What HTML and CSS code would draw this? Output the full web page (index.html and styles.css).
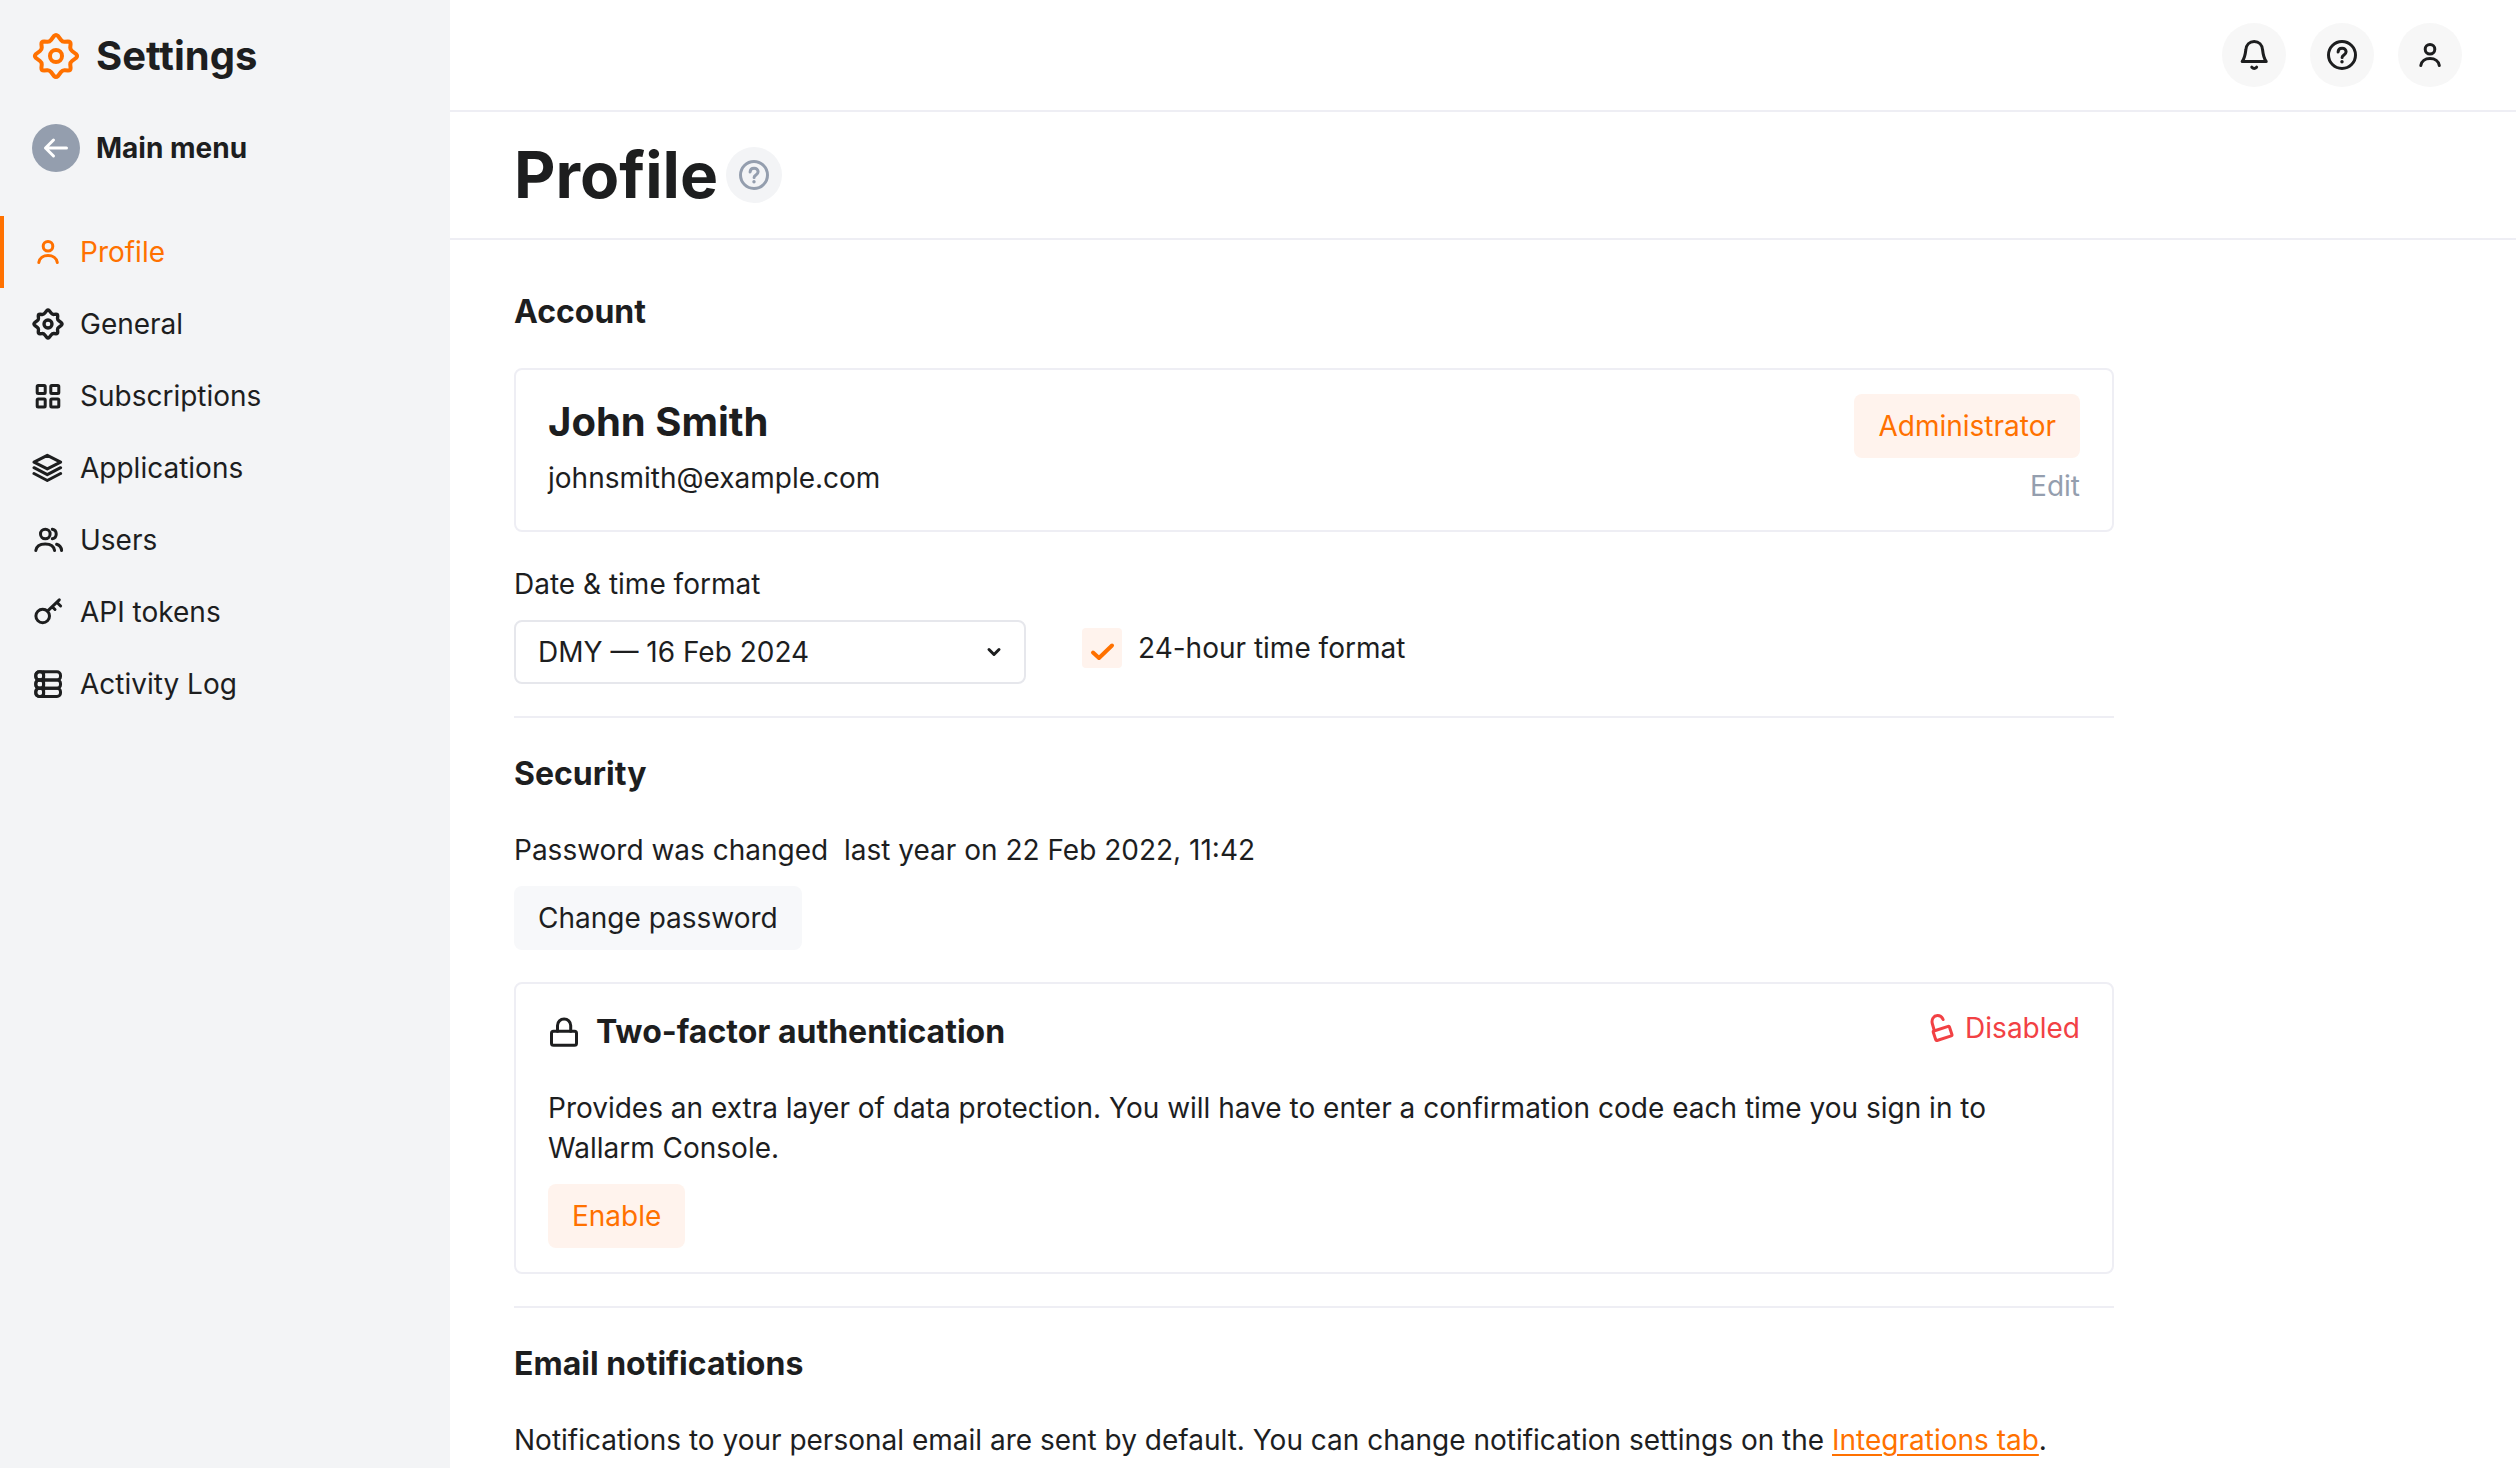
FILE: index.html
```html
<!DOCTYPE html>
<html lang="en">
<head>
<meta charset="utf-8">
<meta name="viewport" content="width=device-width, initial-scale=1">
<title>Profile</title>
<link rel="stylesheet" href="styles.css">
</head>
<body>
<svg class="sprite" aria-hidden="true">
  <symbol id="gear" viewBox="-24 -24 48 48">
    <path d="M-2 -20Q0 -22 2 -20L5 -16Q6.500 -14 9 -14.300L12 -14.600Q14.600 -14.600 14.600 -12L14.300 -9Q14 -6.500 16 -5L20 -2Q22 0 20 2L16 5Q14 6.500 14.300 9L14.600 12Q14.600 14.600 12 14.600L9 14.300Q6.500 14 5 16L2 20Q0 22 -2 20L-5 16Q-6.500 14 -9 14.300L-12 14.600Q-14.600 14.600 -14.600 12L-14.300 9Q-14 6.500 -16 5L-20 2Q-22 0 -20 -2L-16 -5Q-14 -6.500 -14.300 -9L-14.600 -12Q-14.600 -14.600 -12 -14.600L-9 -14.300Q-6.500 -14 -5 -16Z"/>
    <circle r="6"/>
  </symbol>
  <symbol id="person" viewBox="0 0 32 32">
    <circle cx="16" cy="10.200" r="4.800"/>
    <path d="M6.800 26.500C7.400 22.200 11 19.600 16 19.600S24.700 22.200 25.300 26.500"/>
  </symbol>
  <symbol id="question" viewBox="0 0 32 32">
    <circle cx="16" cy="16" r="13.500"/>
    <path d="M12.100 13c.1-2.400 1.800-3.800 4-3.800s4 1.400 4 3.500c0 3.200-4 3.200-4 5.800"/>
    <circle class="dot" cx="16" cy="22.800" r="1.700"/>
  </symbol>
</svg>

<div class="app">
  <aside class="sidebar">
    <div class="brand">
      <svg class="icon icon-brand"><use href="#gear"/></svg>
      <span>Settings</span>
    </div>
    <a class="back" href="#">
      <span class="back-badge">
        <svg class="icon" viewBox="8 8 32 32"><path d="M13.500 24H34.500M21.500 16L13.500 24l8 8"/></svg>
      </span>
      Main menu
    </a>
    <nav class="menu">
      <a class="menu-item active" href="#"><svg class="icon"><use href="#person"/></svg>Profile</a>
      <a class="menu-item" href="#"><svg class="icon icon-gear"><use href="#gear"/></svg>General</a>
      <a class="menu-item" href="#">
        <svg class="icon" viewBox="0 0 32 32"><rect x="5.200" y="5.400" width="8" height="8" rx="1"/><rect x="18.800" y="5.400" width="8" height="8" rx="1"/><rect x="5.200" y="19" width="8" height="8" rx="1"/><rect x="18.800" y="19" width="8" height="8" rx="1"/></svg>Subscriptions</a>
      <a class="menu-item" href="#">
        <svg class="icon" viewBox="0 0 32 32"><path d="M15.300 3.300L28.600 10.100 15.300 16.900 2 10.100zM2 15.700l13.300 7 13.300-7M2 21.500l13.300 7 13.300-7"/></svg>Applications</a>
      <a class="menu-item" href="#">
        <svg class="icon" viewBox="0 0 32 32"><circle cx="13.300" cy="10" r="4.800"/><path d="M20.300 5.200a4.900 4.900 0 0 1 0 9.600M3.800 26.500C4.400 22.400 8 19.900 13.200 19.900S22 22.400 22.600 26.500M24.600 20.300c2.800.8 4.700 3.100 5 6.200"/></svg>Users</a>
      <a class="menu-item" href="#">
        <svg class="icon" viewBox="0 0 32 32"><circle cx="10.700" cy="20" r="6.800"/><path d="M15.500 15.200L27.300 3.800M24.800 6.200l3.800 3.800M20.200 10.700l2.800 2.800"/></svg>API tokens</a>
      <a class="menu-item" href="#">
        <svg class="icon" viewBox="0 0 32 32"><rect x="3.800" y="3.800" width="24.700" height="8.200" rx="3.500"/><rect x="3.800" y="12" width="24.700" height="8.200" rx="3.500"/><rect x="3.800" y="20.200" width="24.700" height="8.200" rx="3.500"/><rect x="3.800" y="3.800" width="7.800" height="8.200" rx="3.500"/><rect x="3.800" y="12" width="7.800" height="8.200" rx="3.500"/><rect x="3.800" y="20.200" width="7.800" height="8.200" rx="3.500"/><path d="M11.600 4V28"/></svg>Activity Log</a>
    </nav>
  </aside>

  <div class="page">
    <header class="topbar">
      <button class="round" type="button" aria-label="Notifications">
        <svg class="icon" viewBox="0 0 32 32"><path d="M4.200 22.500h24c-2.600-3.500-3-6-3.600-11.500-.4-5-3.700-8.400-8.400-8.400s-8 3.400-8.400 8.400c-.6 5.500-1 8-3.600 11.500zM13.800 28.200q2.400 2.600 4.800 0"/></svg>
      </button>
      <button class="round" type="button" aria-label="Help"><svg class="icon"><use href="#question"/></svg></button>
      <button class="round" type="button" aria-label="User"><svg class="icon"><use href="#person"/></svg></button>
    </header>

    <div class="titlebar">
      <h1>Profile</h1>
      <button class="round round-small" type="button" aria-label="About this page"><svg class="icon"><use href="#question"/></svg></button>
    </div>

    <main class="content">
      <section class="section">
        <h2>Account</h2>
        <div class="card account">
          <div class="identity">
            <p class="name">John Smith</p>
            <p>johnsmith@example.com</p>
          </div>
          <div class="role">
            <span class="chip accent">Administrator</span>
            <a class="edit" href="#">Edit</a>
          </div>
        </div>
        <div class="format">
          <label for="date-format">Date &amp; time format</label>
          <div class="format-row">
            <div class="select">
              <select id="date-format"><option>DMY — 16 Feb 2024</option></select>
              <svg class="chevron" viewBox="0 0 16 16"><path d="M3 5.500l5 5 5-5"/></svg>
            </div>
            <label class="check">
              <span class="check-box">
                <input type="checkbox" checked>
                <svg viewBox="0 0 40 40"><path d="M11 24.500l6 5.500L30 17.500"/></svg>
              </span>
              24-hour time format
            </label>
          </div>
        </div>
      </section>

      <section class="section">
        <h2>Security</h2>
        <div class="stack">
          <p class="spaced">Password was changed  last year on 22 Feb 2022, 11:42</p>
          <button class="chip neutral" type="button">Change password</button>
        </div>
        <div class="card">
          <div class="card-head">
            <h2 class="with-icon">
              <svg class="icon" viewBox="0 0 32 32"><rect x="3.500" y="15.300" width="25" height="14" rx="2"/><path d="M9.500 15.300V9.500a6.600 6.600 0 0 1 13.200 0v5.800"/></svg>
              Two-factor authentication
            </h2>
            <span class="status">
              <svg class="icon" viewBox="0 0 32 32"><rect x="9.100" y="16.400" width="17" height="10" rx="1" transform="rotate(-18 17.600 21.400)"/><path d="M9 17.500L7.400 12C6 7 8.800 3.800 12.500 3.600c2.700-.1 4.500 1.300 5.600 3.900"/></svg>
              Disabled
            </span>
          </div>
          <div class="stack">
            <p>Provides an extra layer of data protection. You will have to enter a confirmation code each time you sign in to Wallarm Console.</p>
            <button class="chip accent" type="button">Enable</button>
          </div>
        </div>
      </section>

      <section class="section">
        <h2>Email notifications</h2>
        <p>Notifications to your personal email are sent by default. You can change notification settings on the <a class="link" href="#">Integrations tab</a>.</p>
      </section>
    </main>
  </div>
</div>
</body>
</html>
```
FILE: styles.css
```css
:root {
  --text: #1d1e1f;
  --muted: #949eae;
  --orange: #ff7100;
  --orange-soft: #fff3ed;
  --line: #eeeef4;
  --red: #f24144;
}

* {
  box-sizing: border-box;
}

html,
body {
  height: 100%;
}

body {
  margin: 0;
  overflow: hidden;
  background: #fff;
  color: var(--text);
  font: 400 28px/40px Inter, "Liberation Sans", sans-serif;
}

h1,
h2,
p {
  margin: 0;
}

h1 {
  font-size: 64px;
  line-height: 80px;
}

h2 {
  font-size: 32px;
  line-height: 48px;
}

a {
  color: inherit;
  text-decoration: none;
}

button,
select {
  font: inherit;
  color: inherit;
}

.sprite {
  display: none;
}

.icon {
  flex: none;
  width: 32px;
  height: 32px;
  fill: none;
  stroke: currentColor;
  stroke-width: 3;
  stroke-linecap: round;
  stroke-linejoin: round;
}

.dot {
  fill: currentColor;
  stroke: none;
}

.app {
  display: flex;
  min-height: 100%;
}

/* Sidebar */

.sidebar {
  flex: none;
  width: 450px;
  background: #f3f4f6;
}

.brand,
.back {
  display: flex;
  align-items: center;
  gap: 16px;
  padding: 0 32px;
  font-weight: 700;
}

.brand {
  height: 112px;
  font-size: 40px;
}

.icon-brand {
  width: 48px;
  height: 48px;
  color: var(--orange);
  stroke-width: 4;
}

.back {
  height: 72px;
}

.back-badge {
  display: grid;
  place-items: center;
  width: 48px;
  height: 48px;
  border-radius: 50%;
  background: var(--muted);
  color: #fff;
}

.menu {
  display: flex;
  flex-direction: column;
  margin-top: 32px;
}

.menu-item {
  display: flex;
  align-items: center;
  gap: 16px;
  height: 72px;
  padding: 0 28px;
  border-left: 4px solid transparent;
}

.menu-item.active {
  border-color: var(--orange);
  color: var(--orange);
}

.icon-gear {
  stroke-width: 5;
}

/* Page */

.page {
  flex: 1;
  min-width: 0;
}

.topbar,
.titlebar {
  display: flex;
  align-items: center;
  border-bottom: 2px solid var(--line);
}

.topbar {
  justify-content: flex-end;
  gap: 24px;
  height: 112px;
  padding: 0 54px;
}

.titlebar {
  gap: 8px;
  height: 128px;
  padding: 0 64px;
}

.round {
  display: grid;
  place-items: center;
  width: 64px;
  height: 64px;
  padding: 0;
  border: 0;
  border-radius: 50%;
  background: #f7f7f7;
}

.round-small {
  width: 56px;
  height: 56px;
  background: #f3f4f6;
  color: var(--muted);
}

.content {
  max-width: 1728px;
  padding: 16px 64px 32px;
}

.section {
  display: flex;
  flex-direction: column;
  gap: 32px;
  padding: 32px 0;
}

.section + .section {
  border-top: 2px solid var(--line);
}

.card {
  display: flex;
  flex-direction: column;
  gap: 32px;
  padding: 24px 32px;
  border: 2px solid var(--line);
  border-radius: 8px;
}

.card.account {
  flex-direction: row;
  justify-content: space-between;
}

.identity,
.role {
  display: flex;
  flex-direction: column;
  gap: 8px;
}

.role {
  align-items: flex-end;
}

.name {
  font-size: 40px;
  line-height: 56px;
  font-weight: 700;
}

.edit {
  color: var(--muted);
}

.chip {
  padding: 12px 24px;
  border: 0;
  border-radius: 8px;
}

.accent {
  background: var(--orange-soft);
  color: var(--orange);
}

.neutral {
  background: #f7f8fa;
}

.format,
.stack {
  display: flex;
  flex-direction: column;
  align-items: flex-start;
  gap: 16px;
}

.format-row {
  display: flex;
  align-items: flex-start;
  gap: 56px;
}

.select {
  display: grid;
  align-items: center;
  width: 512px;
}

.select select {
  grid-area: 1 / 1;
  height: 64px;
  padding: 0 56px 0 22px;
  border: 2px solid #e6e7ec;
  border-radius: 8px;
  background: #fff;
  appearance: none;
}

.chevron {
  grid-area: 1 / 1;
  justify-self: end;
  width: 16px;
  height: 16px;
  margin-right: 24px;
  fill: none;
  stroke: currentColor;
  stroke-width: 3;
  stroke-linecap: round;
  stroke-linejoin: round;
  pointer-events: none;
}

.check {
  display: flex;
  gap: 16px;
  padding-top: 8px;
}

.check-box {
  display: grid;
  width: 40px;
  height: 40px;
}

.check-box input,
.check-box svg {
  grid-area: 1 / 1;
  width: 40px;
  height: 40px;
  margin: 0;
}

.check-box input {
  border-radius: 4px;
  background: var(--orange-soft);
  appearance: none;
}

.check-box svg {
  visibility: hidden;
  fill: none;
  stroke: var(--orange);
  stroke-width: 4;
  stroke-linecap: round;
  stroke-linejoin: round;
  pointer-events: none;
}

.check-box input:checked + svg {
  visibility: visible;
}

.spaced {
  white-space: pre-wrap;
}

.card-head {
  display: flex;
  justify-content: space-between;
  align-items: flex-start;
}

.with-icon {
  display: flex;
  align-items: center;
  gap: 16px;
}

.status {
  display: flex;
  align-items: center;
  gap: 8px;
  color: var(--red);
}

.link {
  color: var(--orange);
  text-decoration: underline;
  text-decoration-thickness: 2px;
  text-underline-offset: 4px;
}
```
